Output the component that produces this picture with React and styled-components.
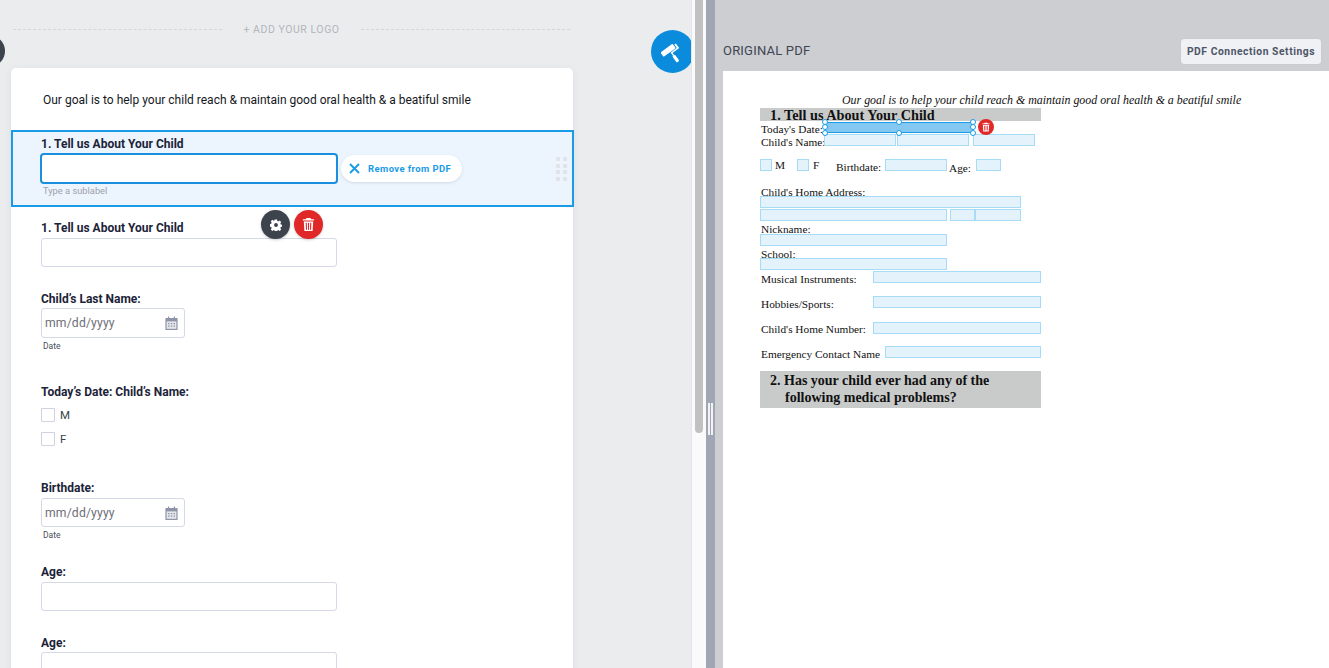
import React from 'react';
import styled, { createGlobalStyle } from 'styled-components';

const Global = createGlobalStyle`
  html, body { margin: 0; padding: 0; height: 100%; overflow: hidden; }
  body { font-family: Roboto, "Liberation Sans", sans-serif; background: #fff; }
  #root { height: 100%; }
  * { box-sizing: border-box; }
`;

const Page = styled.div`
  display: flex;
  width: 1329px;
  height: 668px;
  overflow: hidden;
`;

const BuilderPane = styled.div`
  position: relative;
  width: 692px;
  height: 668px;
  flex: none;
  background: #ebecee;
  border-right: 1px solid #e4e5e8;
  overflow: hidden;
  padding: 0 0 0 11px;
`;

const LogoRow = styled.div`
  display: flex;
  align-items: center;
  width: 561px;
  height: 68px;
  padding: 0 2px 9px 2px;
  gap: 21px;
`;

const LogoDash = styled.div`
  flex: 1;
  border-top: 1px dashed #d5d6da;
`;

const LogoText = styled.div`
  font-size: 10.5px;
  letter-spacing: 0.55px;
  color: #b4b6bc;
  white-space: nowrap;
`;

const SideDot = styled.div`
  position: absolute;
  left: -27px;
  top: 35px;
  width: 32px;
  height: 32px;
  border-radius: 50%;
  background: #3d434c;
`;

const RollerButton = styled.div`
  position: absolute;
  left: 651px;
  top: 30px;
  width: 43px;
  height: 43px;
  border-radius: 50%;
  background: #0a8bdc;
  display: flex;
  align-items: center;
  justify-content: center;
`;

const Card = styled.div`
  position: relative;
  width: 562px;
  height: 620px;
  background: #fff;
  border-radius: 5px 5px 0 0;
  box-shadow: 0 2px 8px rgba(60, 70, 90, 0.08);
`;

const Intro = styled.div`
  padding: 24px 0 0 32px;
  height: 62px;
  font-size: 12px;
  line-height: 16px;
  color: #15181d;
`;

const SelectedRow = styled.div`
  position: relative;
  height: 77px;
  width: 563px;
  background: #ecf5fd;
  border: 2px solid #1a9be8;
  padding: 5px 0 0 28px;
`;

const FieldLabel = styled.div`
  font-size: 12px;
  line-height: 14px;
  font-weight: 700;
  color: #1c2338;
  white-space: nowrap;
`;

const EditRow = styled.div`
  display: flex;
  align-items: center;
  gap: 3px;
  margin-top: 2px;
`;

const ActiveInput = styled.div`
  width: 298px;
  height: 31px;
  background: #fff;
  border: 2px solid #1a8fe0;
  border-radius: 4px;
  margin-left: -1px;
`;

const RemovePill = styled.div`
  display: flex;
  align-items: center;
  gap: 8px;
  width: 121px;
  height: 27px;
  padding-left: 8px;
  background: #fff;
  border-radius: 14px;
  box-shadow: 0 1px 3px rgba(40, 60, 90, 0.14);
  color: #1a9be8;
  font-size: 9.5px;
  font-weight: 700;
  letter-spacing: 0.4px;
  white-space: nowrap;
`;

const Sublabel = styled.div`
  margin: 1px 0 0 2px;
  font-size: 9.3px;
  line-height: 12px;
  color: #9ca1ab;
`;

const DragDots = styled.div`
  position: absolute;
  right: 5px;
  top: 25px;
  display: grid;
  grid-template-columns: repeat(2, 4px);
  grid-auto-rows: 4px;
  gap: 2.5px 3px;
  & > span { background: #e0e3e8; border-radius: 1px; }
`;

const Field = styled.div`
  padding-left: 30px;
  margin-top: ${p => p.$top}px;
`;

const TextBox = styled.div`
  width: 296px;
  height: 29px;
  margin-top: ${p => p.$mt ?? 3}px;
  background: #fff;
  border: 1px solid #d5d8e6;
  border-radius: 3px;
`;

const DateBox = styled.div`
  display: flex;
  align-items: center;
  justify-content: space-between;
  width: 144px;
  height: ${p => p.$h}px;
  margin-top: ${p => p.$mt}px;
  padding: 0 6px 0 3px;
  background: #fff;
  border: 1px solid #d5d8e6;
  border-radius: 3px;
  font-size: 12.2px;
  letter-spacing: 0.15px;
  color: #6d7077;
`;

const DateHint = styled.div`
  margin: 3px 0 0 2px;
  font-size: 8.5px;
  line-height: 11px;
  color: #4a4f5a;
`;

const CheckRow = styled.div`
  display: flex;
  align-items: center;
  gap: 5px;
  height: 14px;
  margin-top: ${p => p.$top}px;
  font-size: 11.5px;
  color: #3a3f4b;
`;

const CheckBox = styled.div`
  width: 14px;
  height: 14px;
  background: #fff;
  border: 1px solid #cfd2de;
  border-radius: 1px;
`;

const FloatTools = styled.div`
  position: absolute;
  left: 250px;
  top: 142px;
  display: flex;
  gap: 4px;
`;

const FloatButton = styled.div`
  width: 29px;
  height: 29px;
  border-radius: 50%;
  background: ${p => p.$bg};
  box-shadow: 0 1px 3px rgba(0, 0, 0, 0.2);
  display: flex;
  align-items: center;
  justify-content: center;
`;

const ScrollTrack = styled.div`
  width: 14px;
  height: 668px;
  flex: none;
  background: #fafafa;
  padding-left: 3px;
`;

const ScrollThumb = styled.div`
  width: 8px;
  height: 433px;
  background: #c1c1c1;
  border-radius: 0 0 4px 4px;
`;

const Splitter = styled.div`
  width: 9px;
  height: 668px;
  flex: none;
  background: #a0a6b4;
  padding: 403px 0 0 2px;
  display: flex;
  gap: 1px;
  & > span { width: 2px; height: 32px; background: #f2f3f5; }
`;

const PdfPane = styled.div`
  flex: 1;
  height: 668px;
  background: #cdced2;
  padding-left: 8px;
  display: flex;
  flex-direction: column;
`;

const PdfHeader = styled.div`
  height: 71px;
  flex: none;
  display: flex;
  align-items: flex-end;
  justify-content: space-between;
  padding: 0 8px 7px 0;
`;

const PdfTitle = styled.div`
  font-size: 13px;
  line-height: 14px;
  letter-spacing: 0.2px;
  color: #3f4552;
  padding-bottom: 6px;
`;

const SettingsButton = styled.div`
  display: flex;
  align-items: center;
  justify-content: center;
  width: 140px;
  height: 25px;
  background: #f0f1f4;
  border-radius: 3px;
  box-shadow: 0 0 1px rgba(0, 0, 0, 0.15);
  font-size: 10.3px;
  font-weight: 700;
  letter-spacing: 0.55px;
  color: #4d5568;
  white-space: nowrap;
`;

/* The PDF page is a free canvas: every text run and overlay sits where the document placed it. */
const PdfSheet = styled.div`
  position: relative;
  flex: 1;
  background: #fff;
  overflow: hidden;
  font-family: "Liberation Serif", serif;
  color: #111;
`;

const PdfText = styled.div`
  position: absolute;
  left: ${p => p.$x - 723}px;
  top: ${p => p.$y - 71 - 7}px;
  font-size: ${p => p.$size || 11.3}px;
  line-height: 14px;
  white-space: nowrap;
  font-style: ${p => (p.$italic ? 'italic' : 'normal')};
  font-weight: ${p => (p.$bold ? 700 : 400)};
`;

const PdfBand = styled.div`
  position: absolute;
  left: 37px;
  top: ${p => p.$y - 71}px;
  width: 281px;
  height: ${p => p.$h}px;
  background: #c9cbcb;
`;

const PdfField = styled.div`
  position: absolute;
  left: ${p => p.$x - 723}px;
  top: ${p => p.$y - 71}px;
  width: ${p => p.$w}px;
  height: 12px;
  background: #e3f2fb;
  border: 1px solid #a6dcf6;
`;

const PdfSelected = styled.div`
  position: absolute;
  left: ${825 - 723}px;
  top: ${122 - 71}px;
  width: 148px;
  height: 11px;
  background: #84c8f2;
  border-top: 1px solid #1a9be8;
  border-bottom: 1px solid #1a9be8;
`;

const Handle = styled.div`
  position: absolute;
  left: ${p => p.$x - 723 - 3}px;
  top: ${p => p.$y - 71 - 3}px;
  width: 6px;
  height: 6px;
  background: #fff;
  border: 1.5px solid #1a9be8;
  border-radius: 50%;
`;

const PdfTrash = styled.div`
  position: absolute;
  left: ${978 - 723}px;
  top: ${119 - 71}px;
  width: 16px;
  height: 16px;
  border-radius: 50%;
  background: #e02828;
  display: flex;
  align-items: center;
  justify-content: center;
`;

const Trash = ({ size, fill = '#fff' }) => (
  <svg width={size} height={size} viewBox="0 0 16 16" aria-hidden="true">
    <path fill={fill} d="M5.8 1h4.4l.6 1.3H14v1.4H2V2.3h3.2L5.8 1zM3 4.7h10l-.6 10.3H3.6L3 4.7zm2 1.4.3 7.5h1.1L6.2 6.1H5zm2.4 0v7.5h1.2V6.1H7.4zm2.4 0-.2 7.5h1.1l.3-7.5H9.8z" />
  </svg>
);

const Gear = () => (
  <svg width="12" height="12" viewBox="0 0 16 16" aria-hidden="true">
    <path fill="#fff" fillRule="evenodd" d="M6.6.6h2.8l.4 2 1.3.6 1.8-1.1 2 2-1.1 1.8.6 1.3 2 .4v2.8l-2 .4-.6 1.3 1.1 1.8-2 2-1.8-1.1-1.3.6-.4 2H6.6l-.4-2-1.3-.6-1.8 1.1-2-2 1.1-1.8-.6-1.3-2-.4V6.6l2-.4.6-1.3-1.1-1.8 2-2 1.8 1.1 1.3-.6.4-2zM8 5.4a2.6 2.6 0 1 0 0 5.2 2.6 2.600 0 0 0 0-5.2z" />
  </svg>
);

const Roller = () => (
  <svg width="24" height="24" viewBox="0 0 24 24" aria-hidden="true">
    <g fill="#fff" transform="rotate(-36 12 12)">
      <rect x="1.500" y="5" width="15" height="5.500" rx="1" />
      <path d="M17.400 6.800h1.900v5.700h-8.200v2.800H9.700v-4.200h7.700V6.800z" />
      <rect x="8.800" y="15.200" width="3.200" height="7.600" rx="0.800" />
    </g>
  </svg>
);

const Calendar = () => (
  <svg width="13" height="14" viewBox="0 0 13 14" aria-hidden="true">
    <path fill="#8e95a8" d="M1 2h2V.6h1.200V2h4.600V.6H10V2h2a.6.6 0 0 1 .6.6v10.800a.6.6 0 0 1-.6.6H1a.6.6 0 0 1-.6-.6V2.600A.6.6 0 0 1 1 2z" />
    <rect x="1.600" y="5.400" width="9.800" height="7.400" fill="#e4e6ec" />
    <path fill="#8e95a8" d="M3 7h1.400v1.200H3zM5.800 7h1.400v1.200H5.800zM8.600 7H10v1.200H8.600zM3 9.600h1.400v1.200H3zM5.800 9.600h1.400v1.200H5.800zM8.600 9.600H10v1.200H8.600z" />
  </svg>
);

const CloseX = () => (
  <svg width="11" height="11" viewBox="0 0 11 11" aria-hidden="true">
    <path d="M1 1l9 9M10 1l-9 9" stroke="#1a9be8" strokeWidth="1.900" strokeLinecap="butt" />
  </svg>
);

const pdfFields = [
  [824, 134, 72], [897, 134, 72], [973, 134, 62],
  [760, 159, 12], [797, 159, 12], [885, 159, 62], [976, 159, 25],
  [760, 196, 261], [760, 209, 187], [950, 209, 25], [975, 209, 46],
  [760, 234, 187], [760, 258, 187],
  [873, 271, 168], [873, 296, 168], [873, 322, 168], [885, 346, 156],
];

const pdfLabels = [
  ["Today's Date:", 761, 129], ["Child's Name:", 761, 142],
  ['M', 775, 165], ['F', 813, 165], ['Birthdate:', 836, 167], ['Age:', 949, 168],
  ["Child's Home Address:", 761, 192], ['Nickname:', 761, 229], ['School:', 761, 254],
  ['Musical Instruments:', 761, 279], ['Hobbies/Sports:', 761, 304],
  ["Child's Home Number:", 761, 329], ['Emergency Contact Name', 761, 354],
];

const handles = [
  [824.5, 122], [824.5, 127], [824.5, 132.5], [898.5, 122], [898.5, 132.5],
  [973, 122], [973, 127], [973, 132.5],
];

export default function App() {
  return (
    <Page>
      <Global />
      <BuilderPane>
        <SideDot />
        <LogoRow>
          <LogoDash />
          <LogoText>+ ADD YOUR LOGO</LogoText>
          <LogoDash />
        </LogoRow>
        <Card>
          <Intro>Our goal is to help your child reach &amp; maintain good oral health &amp; a beatiful smile</Intro>
          <SelectedRow>
            <FieldLabel>1. Tell us About Your Child</FieldLabel>
            <EditRow>
              <ActiveInput />
              <RemovePill><CloseX />Remove from PDF</RemovePill>
            </EditRow>
            <Sublabel>Type a sublabel</Sublabel>
            <DragDots>
              {Array.from({ length: 8 }, (_, i) => <span key={i} />)}
            </DragDots>
          </SelectedRow>
          <FloatTools>
            <FloatButton $bg="#3d434c"><Gear /></FloatButton>
            <FloatButton $bg="#e02828"><Trash size={15} /></FloatButton>
          </FloatTools>
          <Field $top={14}>
            <FieldLabel>1. Tell us About Your Child</FieldLabel>
            <TextBox />
          </Field>
          <Field $top={25}>
            <FieldLabel>Child’s Last Name:</FieldLabel>
            <DateBox $h={30} $mt={2}>mm/dd/yyyy<Calendar /></DateBox>
            <DateHint>Date</DateHint>
          </Field>
          <Field $top={33}>
            <FieldLabel>Today’s Date: Child’s Name:</FieldLabel>
            <CheckRow $top={9}><CheckBox />M</CheckRow>
            <CheckRow $top={10}><CheckBox />F</CheckRow>
          </Field>
          <Field $top={35}>
            <FieldLabel>Birthdate:</FieldLabel>
            <DateBox $h={29} $mt={3}>mm/dd/yyyy<Calendar /></DateBox>
            <DateHint>Date</DateHint>
          </Field>
          <Field $top={24}>
            <FieldLabel>Age:</FieldLabel>
            <TextBox />
          </Field>
          <Field $top={25}>
            <FieldLabel>Age:</FieldLabel>
            <TextBox $mt={2} />
          </Field>
        </Card>
        <RollerButton><Roller /></RollerButton>
      </BuilderPane>
      <ScrollTrack><ScrollThumb /></ScrollTrack>
      <Splitter><span /><span /></Splitter>
      <PdfPane>
        <PdfHeader>
          <PdfTitle>ORIGINAL PDF</PdfTitle>
          <SettingsButton>PDF Connection Settings</SettingsButton>
        </PdfHeader>
        <PdfSheet>
          <PdfText $x={842} $y={100} $size={11.9} $italic>Our goal is to help your child reach &amp; maintain good oral health &amp; a beatiful smile</PdfText>
          <PdfBand $y={108} $h={13} />
          <PdfText $x={770} $y={115} $size={14.25} $bold>1. Tell us About Your Child</PdfText>
          {pdfLabels.map(([t, x, y]) => <PdfText key={t} $x={x} $y={y}>{t}</PdfText>)}
          {pdfFields.map(([x, y, w]) => <PdfField key={`${x}-${y}`} $x={x} $y={y} $w={w} />)}
          <PdfSelected />
          {handles.map(([x, y]) => <Handle key={`${x}-${y}`} $x={x} $y={y} />)}
          <PdfTrash><Trash size={10} /></PdfTrash>
          <PdfBand $y={371} $h={37} />
          <PdfText $x={770} $y={381} $size={14} $bold>2. Has your child ever had any of the</PdfText>
          <PdfText $x={785} $y={398} $size={14} $bold>following medical problems?</PdfText>
        </PdfSheet>
      </PdfPane>
    </Page>
  );
}
